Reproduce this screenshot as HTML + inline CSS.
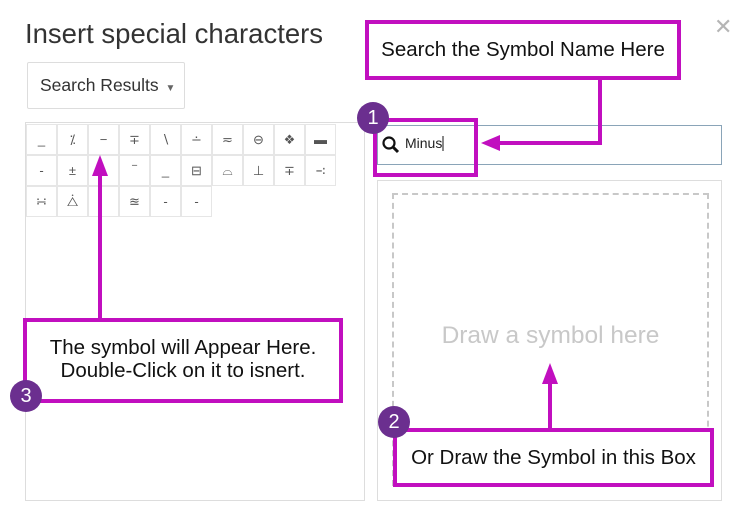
<!DOCTYPE html>
<html><head><meta charset="utf-8"><style>
body{margin:0;width:748px;height:526px;background:#fff;position:relative;overflow:hidden;font-family:"Liberation Sans",sans-serif;}
.a{position:absolute;box-sizing:border-box;}
.cell{position:absolute;width:31px;height:31px;box-sizing:border-box;border:1px solid #e6e6e6;text-align:center;line-height:29px;font-size:13px;color:#555;}
.mag{border:4px solid #c10fbf;background:#fff;}
.circ{width:32px;height:32px;border-radius:50%;background:#6b2f8f;color:#fff;text-align:center;line-height:32px;font-size:20px;}
.t{color:#111;font-size:20.5px;text-align:center;white-space:nowrap;}
</style></head><body>
<div class="a" style="left:25px;top:18px;font-size:27.5px;color:#333;">Insert special characters</div>
<div class="a" style="left:714px;top:14px;font-size:22px;color:#b5b5b5;">✕</div>
<div class="a" style="left:27px;top:62px;width:158px;height:47px;border:1px solid #ddd;border-radius:2px;font-size:17.5px;color:#333;line-height:45px;padding-left:12px;white-space:nowrap;">Search Results <span style="font-size:10px;color:#666;margin-left:2px;">▼</span></div>
<div class="a" style="left:25px;top:122px;width:340px;height:379px;border:1px solid #ddd;"></div>
<div id="g"></div>
<div class="a" style="left:377px;top:125px;width:345px;height:40px;border:1px solid #8aa4b8;"></div>
<div class="a" style="left:377px;top:180px;width:345px;height:321px;border:1px solid #ddd;"></div>
<div class="a" style="left:392px;top:193px;width:317px;height:293px;border:2px dashed #c8c8c8;"></div>
<div class="a" style="left:392px;top:322px;width:317px;text-align:center;font-size:24.5px;color:#c8c8c8;white-space:nowrap;">Draw a symbol here</div>
<svg class="a" style="left:0;top:0" width="748" height="526">
<g stroke="#c10fbf" stroke-width="4" fill="none">
<polyline points="600,80 600,143 495,143"/>
<line x1="100" y1="318" x2="100" y2="172"/>
<line x1="550" y1="428" x2="550" y2="380"/>
</g>
<g fill="#c10fbf">
<polygon points="481,143 500,135 500,151"/>
<polygon points="100,155 92,176 108,176"/>
<polygon points="550,363 542,384 558,384"/>
</g>
<rect x="375" y="120" width="101" height="55" fill="none" stroke="#c10fbf" stroke-width="4"/>
<circle cx="389" cy="143" r="5.5" fill="none" stroke="#111" stroke-width="2.2"/>
<line x1="393" y1="147" x2="398" y2="152" stroke="#111" stroke-width="3"/>
<text x="405" y="148" font-size="14" fill="#222" font-family="Liberation Sans">Minus</text>
<line x1="443" y1="136" x2="443" y2="151" stroke="#111" stroke-width="1"/>
</svg>
<div class="a mag t" style="left:365px;top:20px;width:316px;height:60px;line-height:52px;">Search the Symbol Name Here</div>
<div class="a mag t" style="left:23px;top:318px;width:320px;height:85px;padding-top:14px;line-height:23px;">The symbol will Appear Here.<br>Double-Click on it to isnert.</div>
<div class="a mag t" style="left:393px;top:428px;width:321px;height:59px;line-height:51px;">Or Draw the Symbol in this Box</div>
<div class="a circ" style="left:357px;top:102px;">1</div>
<div class="a circ" style="left:10px;top:380px;">3</div>
<div class="a circ" style="left:378px;top:406px;">2</div>
<script>
var s=[["_","⁒","−","∓","∖","∸","≂","⊖","❖","▬"],["-","±","","‾","_","⊟","⌓","⊥","∓","∹"],["∺","⧊","","≊","-","-"]];
var h="";s.forEach(function(r,i){r.forEach(function(c,j){h+='<div class="cell" style="left:'+(26+j*31)+'px;top:'+(124+i*31)+'px">'+c+'</div>';});});
document.getElementById("g").innerHTML=h;
</script>
</body></html>
